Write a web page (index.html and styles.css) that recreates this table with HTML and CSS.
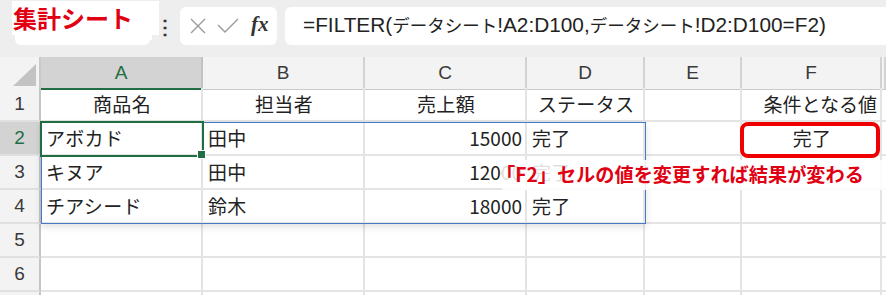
FILE: index.html
```html
<!DOCTYPE html>
<html lang="ja">
<head>
<meta charset="utf-8">
<link rel="stylesheet" href="styles.css">
</head>
<body>
<div class="toolbar">
  <div class="namebox">
    <svg class="chev" width="12" height="8" viewBox="0 0 12 8"><path d="M1 1.5 L6 6.5 L11 1.5" fill="none" stroke="#b8b8b8" stroke-width="1.3"/></svg>
    <span class="label">集計シート</span>
  </div>
  <div class="dots">⋮</div>
  <div class="fxbox">
    <svg width="18" height="18" viewBox="0 0 18 18"><path d="M2 2 L16 16 M16 2 L2 16" stroke="#9a9a9a" stroke-width="1.4" fill="none"/></svg>
    <svg width="22" height="16" viewBox="0 0 22 16"><path d="M1 7 L8 14 L21 1" stroke="#9a9a9a" stroke-width="1.4" fill="none"/></svg>
    <span class="fx">fx</span>
  </div>
  <div class="formula">=FILTER(<span class="kana">データシート</span>!A2:D100,<span class="kana">データシート</span>!D2:D100=F2)</div>
</div>
<div class="sheet">
  <div class="row head">
    <div class="corner"><svg width="23" height="22" viewBox="0 0 23 22"><polygon points="23,0 23,22 0,22" fill="#c3c3c3"/></svg></div>
    <div class="ch sel">A</div>
    <div class="ch">B</div>
    <div class="ch">C</div>
    <div class="ch">D</div>
    <div class="ch">E</div>
    <div class="ch">F</div>
    <div class="ch"></div>
  </div>
  <div class="row">
    <div class="rh">1</div>
    <div class="c center">商品名</div>
    <div class="c center">担当者</div>
    <div class="c center">売上額</div>
    <div class="c center">ステータス</div>
    <div class="c"></div>
    <div class="c right">条件となる値</div>
    <div class="c"></div>
  </div>
  <div class="row">
    <div class="rh sel">2</div>
    <div class="c active">アボカド</div>
    <div class="c">田中</div>
    <div class="c right">15000</div>
    <div class="c">完了</div>
    <div class="c"></div>
    <div class="c center marked">完了</div>
    <div class="c"></div>
  </div>
  <div class="row">
    <div class="rh">3</div>
    <div class="c">キヌア</div>
    <div class="c">田中</div>
    <div class="c right">12000</div>
    <div class="c">完了</div>
    <div class="c"></div>
    <div class="c"></div>
    <div class="c"></div>
  </div>
  <div class="row">
    <div class="rh">4</div>
    <div class="c">チアシード</div>
    <div class="c">鈴木</div>
    <div class="c right">18000</div>
    <div class="c">完了</div>
    <div class="c"></div>
    <div class="c"></div>
    <div class="c"></div>
  </div>
  <div class="row">
    <div class="rh">5</div>
    <div class="c"></div><div class="c"></div><div class="c"></div><div class="c"></div><div class="c"></div><div class="c"></div><div class="c"></div>
  </div>
  <div class="row">
    <div class="rh">6</div>
    <div class="c"></div><div class="c"></div><div class="c"></div><div class="c"></div><div class="c"></div><div class="c"></div><div class="c"></div>
  </div>
  <div class="row">
    <div class="rh"></div>
    <div class="c"></div><div class="c"></div><div class="c"></div><div class="c"></div><div class="c"></div><div class="c"></div><div class="c"></div>
  </div>
  <div class="spill"></div>
  <div class="note"><span>「F2」セルの値を変更すれば結果が変わる</span></div>
</div>
</body>
</html>
```
FILE: styles.css
```css
* { box-sizing: border-box; }
html, body { margin: 0; padding: 0; }
body {
  width: 886px;
  height: 295px;
  overflow: hidden;
  background: #fff;
  font-family: "Noto Sans CJK JP", "Noto Sans", sans-serif;
  color: #222;
}
.toolbar {
  height: 57px;
  background: #eeeeee;
  display: flex;
  align-items: flex-start;
  padding: 7px 0 0 15px;
}
.namebox {
  position: relative;
  width: 135px;
  height: 38px;
  background: #fff;
  border-radius: 6px;
  flex: none;
}
.namebox .chev {
  position: absolute;
  left: 120px;
  top: 19px;
}
.namebox .label {
  position: absolute;
  left: -3px;
  top: -6px;
  font-size: 24px;
  font-weight: 700;
  color: #e00012;
  line-height: 34px;
  white-space: nowrap;
  background: #fff;
  padding: 0 26px 0 1px;
}
.dots {
  width: 30px;
  flex: none;
  text-align: center;
  font-size: 20px;
  line-height: 38px;
  font-weight: 700;
  color: #333;
  background: linear-gradient(#fff, #fff) 0 0 / 2px 33px no-repeat;
}
.fxbox {
  width: 97px;
  height: 38px;
  flex: none;
  background: #fff;
  border-radius: 6px;
  display: flex;
  align-items: center;
  padding-left: 9px;
  gap: 10px;
}
.fx {
  font-family: "Liberation Serif", serif;
  font-style: italic;
  font-weight: 700;
  font-size: 21px;
  color: #333;
  margin-left: 2px;
  margin-top: -3px;
}
.formula {
  flex: none;
  width: 610px;
  margin-left: 8px;
  height: 38px;
  background: #fff;
  border-radius: 6px;
  padding-left: 18px;
  font-family: "Liberation Sans", "Noto Sans CJK JP", sans-serif;
  font-size: 20.8px;
  line-height: 36px;
  color: #222;
  white-space: nowrap;
}
.formula .kana {
  font-family: "Noto Sans CJK JP", sans-serif;
  font-size: 17.5px;
}
.sheet {
  position: relative;
}
.row {
  display: grid;
  grid-template-columns: 41px 162px 162px 162px 118px 97px 140px 1fr;
  height: 34px;
}
.row.head { height: 31px; }
.corner {
  background: #f3f3f3;
  border-right: 2px solid #c9c9c9;
  border-bottom: 1px solid #c9c9c9;
  display: flex;
  align-items: flex-end;
  justify-content: flex-end;
  padding: 0 3px 3px 0;
}
.ch {
  background: #f3f3f3;
  border-right: 2px solid #d3d3d3;
  border-bottom: 1px solid #c9c9c9;
  text-align: center;
  font-family: "Liberation Sans", sans-serif;
  font-size: 19px;
  line-height: 31px;
  color: #3a3a3a;
}
.ch.sel {
  background: #d3d3d3;
  color: #1f6e43;
  border-bottom: 2px solid #1f6e43;
  border-right-color: #c2c2c2;
}
.rh {
  background: #f3f3f3;
  border-right: 2px solid #c4c4c4;
  border-bottom: 2px solid #e0e0e0;
  text-align: center;
  font-family: "Liberation Sans", sans-serif;
  font-size: 19px;
  line-height: 32px;
  color: #3a3a3a;
}
.rh.sel {
  background: #d3d3d3;
  color: #1f6e43;
}
.c {
  position: relative;
  border-right: 2px solid #e4e4e4;
  border-bottom: 2px solid #e4e4e4;
  font-size: 19px;
  line-height: 32px;
  padding: 0 3px 0 5px;
  white-space: nowrap;
  color: #222;
  letter-spacing: 0.3px;
}
.center { text-align: center; }
.right { text-align: right; letter-spacing: 0; }
.active {
  outline: 2px solid #1f6e43;
  outline-offset: -1px;
  z-index: 3;
}
.active::after {
  content: "";
  position: absolute;
  right: -5px;
  bottom: -5px;
  width: 7px;
  height: 7px;
  background: #1f6e43;
  border: 1px solid #fff;
}
.marked::before {
  content: "";
  position: absolute;
  left: -2px;
  top: 0px;
  right: 0px;
  bottom: -4px;
  border: 4px solid #ee0000;
  border-radius: 8px;
  z-index: 4;
}
.spill {
  position: absolute;
  left: 41px;
  top: 65px;
  width: 605px;
  height: 102px;
  border: 1.5px solid #4a78c8;
  box-shadow: 0 3px 7px rgba(0,0,0,0.12);
  pointer-events: none;
  z-index: 2;
}
.note {
  position: absolute;
  left: 502px;
  top: 103px;
  width: 384px;
  height: 30px;
  background: rgba(255,255,255,0.86);
  color: #e00012;
  font-size: 19.2px;
  font-weight: 700;
  line-height: 28px;
  white-space: nowrap;
  z-index: 5;
}
.note span {
  margin-left: -6px;
}
```
